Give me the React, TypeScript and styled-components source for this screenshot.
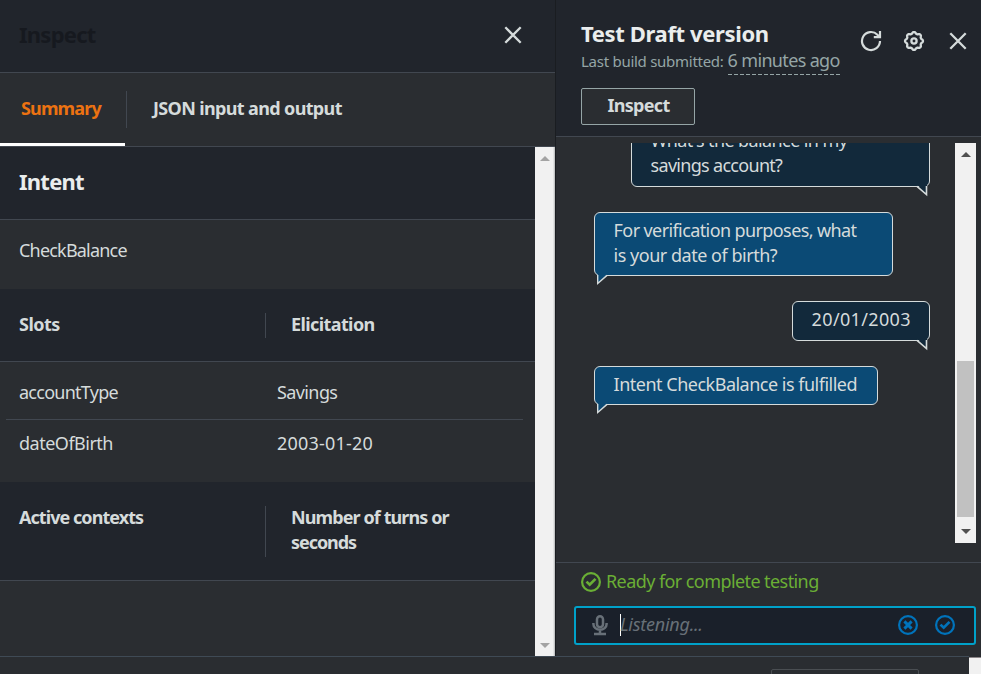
import React from "react";
import styled, { createGlobalStyle, css } from "styled-components";

const color = {
  header: "#21252c",
  body: "#2a2d31",
  line: "#414750",
  text: "#d5dbdb",
  heading: "#eaeded",
  muted: "#95a5a6",
  accent: "#ec7211",
  focus: "#00a1c9",
  link: "#0073bb",
  success: "#6aaf35",
  bot: "#0b4a75",
  user: "#12293b",
};

const GlobalStyle = createGlobalStyle`
  * { box-sizing: border-box; }
  html, body, #root { margin: 0; height: 100%; }
  body {
    overflow: hidden;
    background: ${color.body};
    color: ${color.text};
    font: 400 18px/25px "Noto Sans", "Open Sans", sans-serif;
  }
  h2, h3, p { margin: 0; }
  button { font: inherit; color: inherit; background: none; border: 0; padding: 0; }
  svg { display: block; }
`;

const Text = styled.span<{ $track?: number; $bold?: boolean }>`
  letter-spacing: ${({ $track = 0 }) => $track}px;
  font-weight: ${({ $bold }) => ($bold ? 700 : 450)};
  white-space: nowrap;
`;

const Page = styled.div`
  width: 981px;
  height: 674px;
  display: flex;
  flex-direction: column;
  overflow: hidden;
`;

const Panels = styled.div`
  display: flex;
  height: 656px;
`;

/* Inspect panel */

const InspectPanel = styled.section`
  width: 556px;
  display: flex;
  flex-direction: column;
  border-right: 1px solid #1a1d21;
`;

const InspectHeader = styled.header`
  height: 73px;
  padding: 0 33px 2px 19px;
  display: flex;
  align-items: center;
  justify-content: space-between;
  background: ${color.header};
  border-bottom: 1px solid ${color.line};
`;

const Title = styled.h2<{ $dim?: boolean }>`
  font-size: 22px;
  line-height: 28px;
  padding-bottom: 2px;
  font-weight: 700;
  color: ${({ $dim }) => ($dim ? "#16191f" : color.heading)};
`;

const Tabs = styled.nav`
  height: 74px;
  display: flex;
  border-bottom: 1px solid ${color.line};
`;

const Tab = styled.button<{ $active?: boolean }>`
  display: flex;
  align-items: center;
  padding: 0 25px 2px 26px;
  ${({ $active }) =>
    $active &&
    css`
      width: 125px;
      padding: 0 0 0 21px;
      color: ${color.accent};
      border-bottom: 3px solid #fff;
    `}
`;

const TabDivider = styled.i`
  width: 1px;
  height: 37px;
  margin: 18px 0 0 1px;
  background: ${color.line};
`;

const InspectBody = styled.div`
  flex: 1;
  min-height: 0;
  display: flex;
`;

const Details = styled.div`
  flex: 1;
`;

const SectionTitle = styled.div`
  height: 73px;
  padding: 20px 19px 0;
  background: ${color.header};
  border-bottom: 1px solid ${color.line};
`;

const IntentName = styled.div`
  height: 69px;
  padding: 18px 19px 0;
`;

const TableHead = styled.div<{ $height: number }>`
  height: ${({ $height }) => $height}px;
  display: grid;
  grid-template-columns: 265px 1fr;
  padding: 24px 0 23px;
  background: ${color.header};
  border-bottom: 1px solid ${color.line};
`;

const HeadCell = styled.div<{ $divided?: boolean }>`
  padding-left: ${({ $divided }) => ($divided ? 25 : 19)}px;
  border-left: ${({ $divided }) => ($divided ? `1px solid ${color.line}` : "0")};
  display: flex;
  flex-direction: column;
  line-height: 25px;

  & > :first-child { margin-top: -1px; }
`;

const Rows = styled.div`
  height: 120px;
  padding: 7px 12px 0 6px;
`;

const Row = styled.div<{ $last?: boolean }>`
  display: grid;
  grid-template-columns: 258px 1fr;
  height: 51px;
  padding: 11px 0 0 13px;
  border-bottom: ${({ $last }) => ($last ? "0" : `1px solid ${color.line}`)};
`;

/* Scrollbars */

const Track = styled.div<{ $edge?: boolean }>`
  width: ${({ $edge }) => ($edge ? 20 : 21)}px;
  flex: none;
  display: flex;
  flex-direction: column;
  align-items: center;
  justify-content: space-between;
  padding: 9px 0 ${({ $edge }) => ($edge ? 8 : 9)}px;
  background: #f1f1f1;
  ${({ $edge }) => $edge && css`box-shadow: inset -1px 0 #c2c4c5, inset -2px 0 #e2e3e3;`}
`;

const Thumb = styled.div`
  width: 17px;
  height: 156px;
  margin: auto 0 12px;
  background: #c1c1c1;
`;

const Arrow = styled.i<{ $down?: boolean; $dark?: boolean }>`
  border: solid transparent;
  border-width: ${({ $down }) => ($down ? "5px 5px 0" : "0 5px 5px")};
  border-${({ $down }) => ($down ? "top" : "bottom")}-color: ${({ $dark }) => ($dark ? "#505050" : "#a3a3a3")};
`;

/* Test panel */

const TestPanel = styled.section`
  flex: 1;
  display: flex;
  flex-direction: column;
`;

const TestHeader = styled.header`
  height: 137px;
  padding: 19px 14px 0 25px;
  display: flex;
  justify-content: space-between;
  background: ${color.header};
  border-bottom: 1px solid ${color.line};
`;

const BuildInfo = styled.p`
  display: flex;
  align-items: baseline;
  gap: 4px;
  height: 26px;
  line-height: 23px;
  color: ${color.muted};
`;

const Small = styled(Text)`
  font-size: 15px;
`;

const Ago = styled(Text)`
  height: 26px;
  background: repeating-linear-gradient(90deg, ${color.muted} 0 4px, transparent 4px 6px) bottom / 100% 1px no-repeat;
`;

const InspectButton = styled.button`
  width: 114px;
  height: 37px;
  margin-top: 13px;
  display: flex;
  align-items: center;
  justify-content: center;
  padding: 0 0 2px 1px;
  background: ${color.body};
  border: 1px solid ${color.muted};
  border-radius: 2px;
`;

const Actions = styled.div`
  display: flex;
  gap: 21px;
  height: 22px;
  margin-top: 11px;

  & > :last-child { margin-left: 3px; }
`;

const Chat = styled.div`
  height: 400px;
  margin: 6px 5px 0 38px;
  display: flex;
  overflow: hidden;
`;

const Messages = styled.div`
  flex: 1;
  margin: -21px 25px 0 0;
  display: flex;
  flex-direction: column;
  align-items: flex-start;
  gap: 25px;
`;

const Bubble = styled.div<{ $user?: boolean; $width: number; $height: number }>`
  position: relative;
  flex: none;
  width: ${({ $width }) => $width}px;
  height: ${({ $height }) => $height}px;
  align-self: ${({ $user }) => ($user ? "flex-end" : "flex-start")};
  display: flex;
  flex-direction: column;
  padding: 5px 0 0 18.6px;
  background: ${({ $user }) => ($user ? color.user : color.bot)};
  border: 1px solid ${color.text};
  border-radius: 6px;
`;

const TailSvg = styled.svg<{ $user?: boolean }>`
  position: absolute;
  top: calc(100% - 1px);
  ${({ $user }) => ($user ? "right: 0;" : "left: 1px;")}
`;

const Footer = styled.footer`
  height: 94px;
  margin-top: 19px;
  padding: 5px 5px 0 18px;
  border-top: 1px solid ${color.line};
`;

const Status = styled.div`
  display: flex;
  align-items: center;
  gap: 5px;
  height: 26px;
  padding-left: 7px;
  color: ${color.success};
`;

const StatusIcon = styled.span`
  margin-top: 1px;
`;

const Input = styled.div`
  height: 39px;
  margin-top: 12px;
  display: flex;
  align-items: center;
  padding: 0 19px 1px 16px;
  background: #1a202a;
  border: 2px solid ${color.focus};
  border-radius: 3px;
`;

const Placeholder = styled.div`
  flex: 1;
  height: 22px;
  margin-left: 12px;
  border-left: 1px solid #fff;
  line-height: 21px;
  font-style: italic;
  color: #687078;
  text-indent: -1px;
`;

const InputActions = styled.div`
  display: flex;
  gap: 17px;
`;

/* Strip of the page below the panels */

const BottomStrip = styled.div`
  height: 18px;
  display: flex;
  justify-content: space-between;
`;

const StripMain = styled.div`
  width: 969px;
  padding: 12px 50px 0 0;
  border-top: 1px solid #3f4a55;
  overflow: hidden;
`;

const StripButton = styled.div`
  width: 148px;
  height: 20px;
  margin-left: auto;
  border: 1px solid #4a4e52;
  border-radius: 2px;
`;

const StripCorner = styled.div`
  width: 12px;
  margin-top: 1px;
  background: #f1f1f1;
  border-top: 1px solid #8b8588;
`;

const CloseIcon = () => (
  <svg width="18" height="18" viewBox="0 0 18 18" fill="none" stroke={color.text} strokeWidth="2.3">
    <path d="M1.3 1.3 16.7 16.7M16.7 1.3 1.3 16.7" />
  </svg>
);

const RefreshIcon = () => (
  <svg width="22" height="22" viewBox="0 0 22 22" fill="none" stroke={color.text} strokeWidth="2.2">
    <path d="M20 11A9 9 0 1 1 17.4 4.7L19.6 7" />
    <path d="M20 1V7.2H13.8" />
  </svg>
);

const gearPath =
  Array.from({ length: 96 }, (_, i) => {
    const angle = (i / 96) * Math.PI * 2;
    const wave = Math.cos(angle * 8);
    const radius = 8.2 + 0.75 * Math.sign(wave) * Math.pow(Math.abs(wave), 0.6);
    const x = 11 + radius * Math.sin(angle);
    const y = 11 - radius * Math.cos(angle);
    return `${i ? "L" : "M"}${x.toFixed(2)} ${y.toFixed(2)}`;
  }).join("") + "Z";

const GearIcon = () => (
  <svg width="22" height="22" viewBox="0 0 22 22" fill="none" stroke={color.text} strokeWidth="2.3" strokeLinejoin="round">
    <path d={gearPath} />
    <circle cx="11" cy="11" r="2.6" />
  </svg>
);

const CircleIcon = ({ stroke, cross }: { stroke: string; cross?: boolean }) => (
  <svg width="20" height="20" viewBox="0 0 20 20" fill="none" stroke={stroke} strokeWidth="2.2">
    <circle cx="10" cy="10" r="8.9" />
    {cross ? <path d="M6.4 6.4l7.2 7.2M13.6 6.4l-7.2 7.2" strokeWidth="2.9" /> : <path d="M5.5 9.6l3.2 3.1 5.8-5.8" strokeWidth="2.7" />}
  </svg>
);

const MicIcon = () => (
  <svg width="16" height="22" viewBox="0 0 16 22" fill="none" stroke="#687078" strokeWidth="2.5">
    <rect x="5" y="2.2" width="6" height="11" rx="3" />
    <path d="M1.4 9v1a6.6 5.8 0 0 0 13.2 0V9M8 16v4M2 20h12" />
  </svg>
);

const Tail = ({ user }: { user?: boolean }) => (
  <TailSvg $user={user} width="13" height="12" viewBox="0 0 13 12">
    {user ? (
      <>
        <path d="M1.5 0H11V9.5Z" fill={color.user} />
        <path d="M1 1.3 10.5 9.6V1" fill="none" stroke={color.text} strokeWidth="1.6" />
      </>
    ) : (
      <>
        <path d="M2 0H11.5L2 9.5Z" fill={color.bot} />
        <path d="M1.7 1V9.5L11 1.4" fill="none" stroke={color.text} strokeWidth="1.4" />
      </>
    )}
  </TailSvg>
);

type Line = [text: string, track: number];
const messages: { user?: boolean; width: number; height: number; lines: Line[] }[] = [
  { user: true, width: 299, height: 65, lines: [["What's the balance in my", -0.6], ["savings account?", -0.7]] },
  { width: 299, height: 64, lines: [["For verification purposes, what", -0.6], ["is your date of birth?", -0.48]] },
  { user: true, width: 138, height: 40, lines: [["20/01/2003", 0.35]] },
  { width: 284, height: 39, lines: [["Intent CheckBalance is fulfilled", -0.5]] },
];

export default function App() {
  return (
    <Page>
      <GlobalStyle />
      <Panels>
        <InspectPanel>
          <InspectHeader>
            <Title $dim><Text $bold $track={-0.75}>Inspect</Text></Title>
            <button aria-label="Close inspect"><CloseIcon /></button>
          </InspectHeader>
          <Tabs>
            <Tab $active><Text $bold $track={-0.85}>Summary</Text></Tab>
            <TabDivider />
            <Tab><Text $bold $track={-0.64}>JSON input and output</Text></Tab>
          </Tabs>
          <InspectBody>
            <Details>
              <SectionTitle><Title as="h3"><Text $bold $track={-0.75}>Intent</Text></Title></SectionTitle>
              <IntentName><Text $track={-0.8}>CheckBalance</Text></IntentName>
              <TableHead $height={73}>
                <HeadCell><Text $bold $track={-0.5}>Slots</Text></HeadCell>
                <HeadCell $divided><Text $bold $track={-0.6}>Elicitation</Text></HeadCell>
              </TableHead>
              <Rows>
                <Row>
                  <Text $track={-0.74}>accountType</Text>
                  <Text $track={-0.6}>Savings</Text>
                </Row>
                <Row $last>
                  <Text $track={-0.5}>dateOfBirth</Text>
                  <Text $track={0.2}>2003-01-20</Text>
                </Row>
              </Rows>
              <TableHead $height={99}>
                <HeadCell><Text $bold $track={-0.95}>Active contexts</Text></HeadCell>
                <HeadCell $divided>
                  <Text $bold $track={-0.9}>Number of turns or</Text>
                  <Text $bold $track={-1.05}>seconds</Text>
                </HeadCell>
              </TableHead>
            </Details>
            <Track $edge><Arrow /><Arrow $down /></Track>
          </InspectBody>
        </InspectPanel>

        <TestPanel>
          <TestHeader>
            <div>
              <Title><Text $bold $track={-0.36}>Test Draft version</Text></Title>
              <BuildInfo>
                <Small $track={-0.27}>Last build submitted:</Small>
                <Ago $track={-0.66}>6 minutes ago</Ago>
              </BuildInfo>
              <InspectButton><Text $bold $track={-0.7}>Inspect</Text></InspectButton>
            </div>
            <Actions>
              <button aria-label="Refresh"><RefreshIcon /></button>
              <button aria-label="Settings"><GearIcon /></button>
              <button aria-label="Close test"><CloseIcon /></button>
            </Actions>
          </TestHeader>
          <Chat>
            <Messages>
              {messages.map(({ user, width, height, lines }) => (
                <Bubble key={lines[0][0]} $user={user} $width={width} $height={height}>
                  {lines.map(([text, track]) => <Text key={text} $track={track}>{text}</Text>)}
                  <Tail user={user} />
                </Bubble>
              ))}
            </Messages>
            <Track><Arrow $dark /><Thumb /><Arrow $down $dark /></Track>
          </Chat>
          <Footer>
            <Status>
              <StatusIcon><CircleIcon stroke={color.success} /></StatusIcon>
              <Text $track={-0.58}>Ready for complete testing</Text>
            </Status>
            <Input>
              <MicIcon />
              <Placeholder><Text $track={-0.25}>Listening...</Text></Placeholder>
              <InputActions>
                <CircleIcon stroke={color.link} cross />
                <CircleIcon stroke={color.link} />
              </InputActions>
            </Input>
          </Footer>
        </TestPanel>
      </Panels>
      <BottomStrip>
        <StripMain><StripButton /></StripMain>
        <StripCorner />
      </BottomStrip>
    </Page>
  );
}
